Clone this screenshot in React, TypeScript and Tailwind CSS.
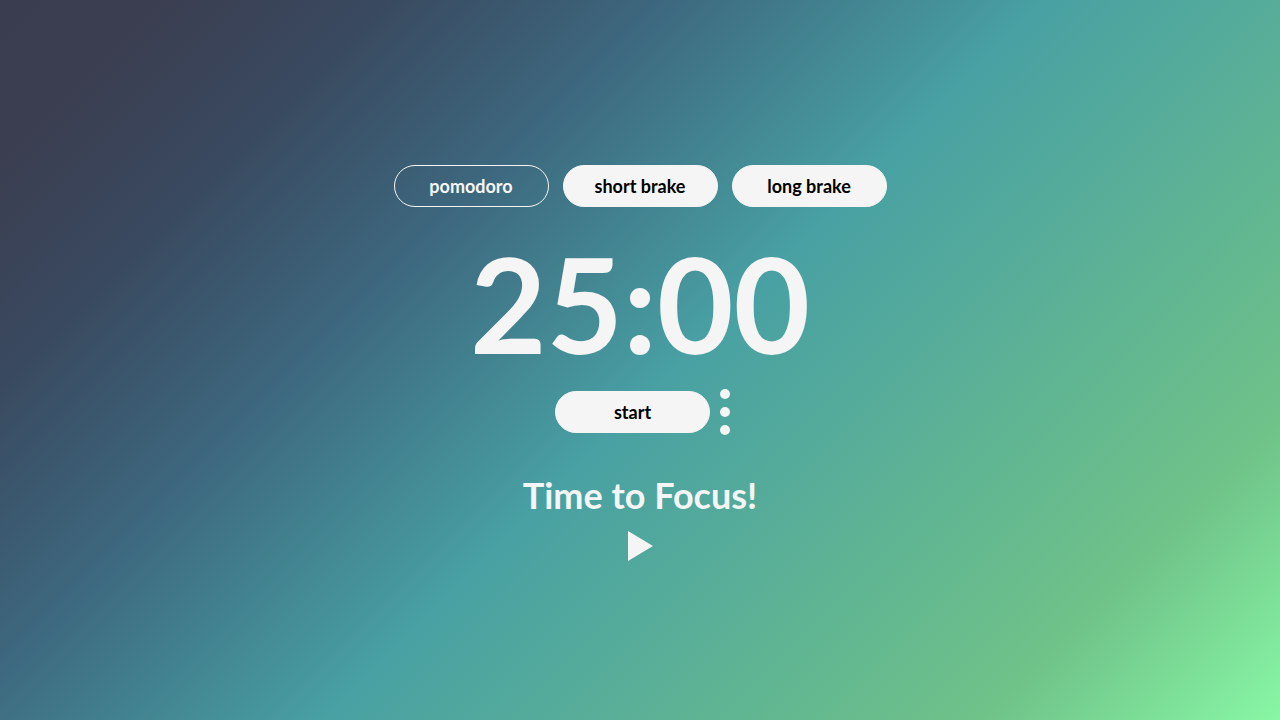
const modes = ["pomodoro", "short brake", "long brake"];

const pill =
  "h-[42px] w-[155px] cursor-pointer rounded-full border text-lg leading-6";

export default function App() {
  const active = "pomodoro";
  return (
    <main className="flex min-h-screen flex-col items-center justify-center bg-[linear-gradient(135deg,#3a3d50_0%,#3b3e51_8%,#39495f_19%,#3d677e_33%,#48a0a3_52%,#6fc288_85%,#88f7a5_100%)] pt-[5px] font-['Lato',sans-serif] font-bold text-[#f5f5f5]">
      <nav className="flex flex-wrap justify-center gap-3.5" aria-label="Timer mode">
        {modes.map((mode) => (
          <button
            key={mode}
            type="button"
            aria-pressed={mode === active}
            className={
              mode === active
                ? `${pill} border-[#f5f5f5] bg-transparent font-bold text-[#f5f5f5]`
                : `${pill} border-[#f5f5f5] bg-[#f5f5f5] font-bold text-black`
            }
          >
            {mode}
          </button>
        ))}
      </nav>
      <p className="mt-[30px] text-[132px] leading-none font-bold" role="timer">
        25:00
      </p>
      <div className="mt-5 flex items-center gap-2.5 pl-[5px]">
        <button
          type="button"
          className={`${pill} border-[#f5f5f5] bg-[#f5f5f5] font-bold text-black`}
        >
          start
        </button>
        <button
          type="button"
          aria-label="Settings"
          className="flex cursor-pointer flex-col gap-2"
        >
          <span className="size-2.5 rounded-full bg-[#f5f5f5]" />
          <span className="size-2.5 rounded-full bg-[#f5f5f5]" />
          <span className="size-2.5 rounded-full bg-[#f5f5f5]" />
        </button>
      </div>
      <h1 className="mt-10 text-4xl leading-10 font-bold">Time to Focus!</h1>
      <button type="button" aria-label="Play" className="mt-4 cursor-pointer">
        <svg width="25" height="30" viewBox="0 0 25 30" aria-hidden="true">
          <path d="M0 0L25 15L0 30Z" fill="#f5f5f5" />
        </svg>
      </button>
    </main>
  );
}
